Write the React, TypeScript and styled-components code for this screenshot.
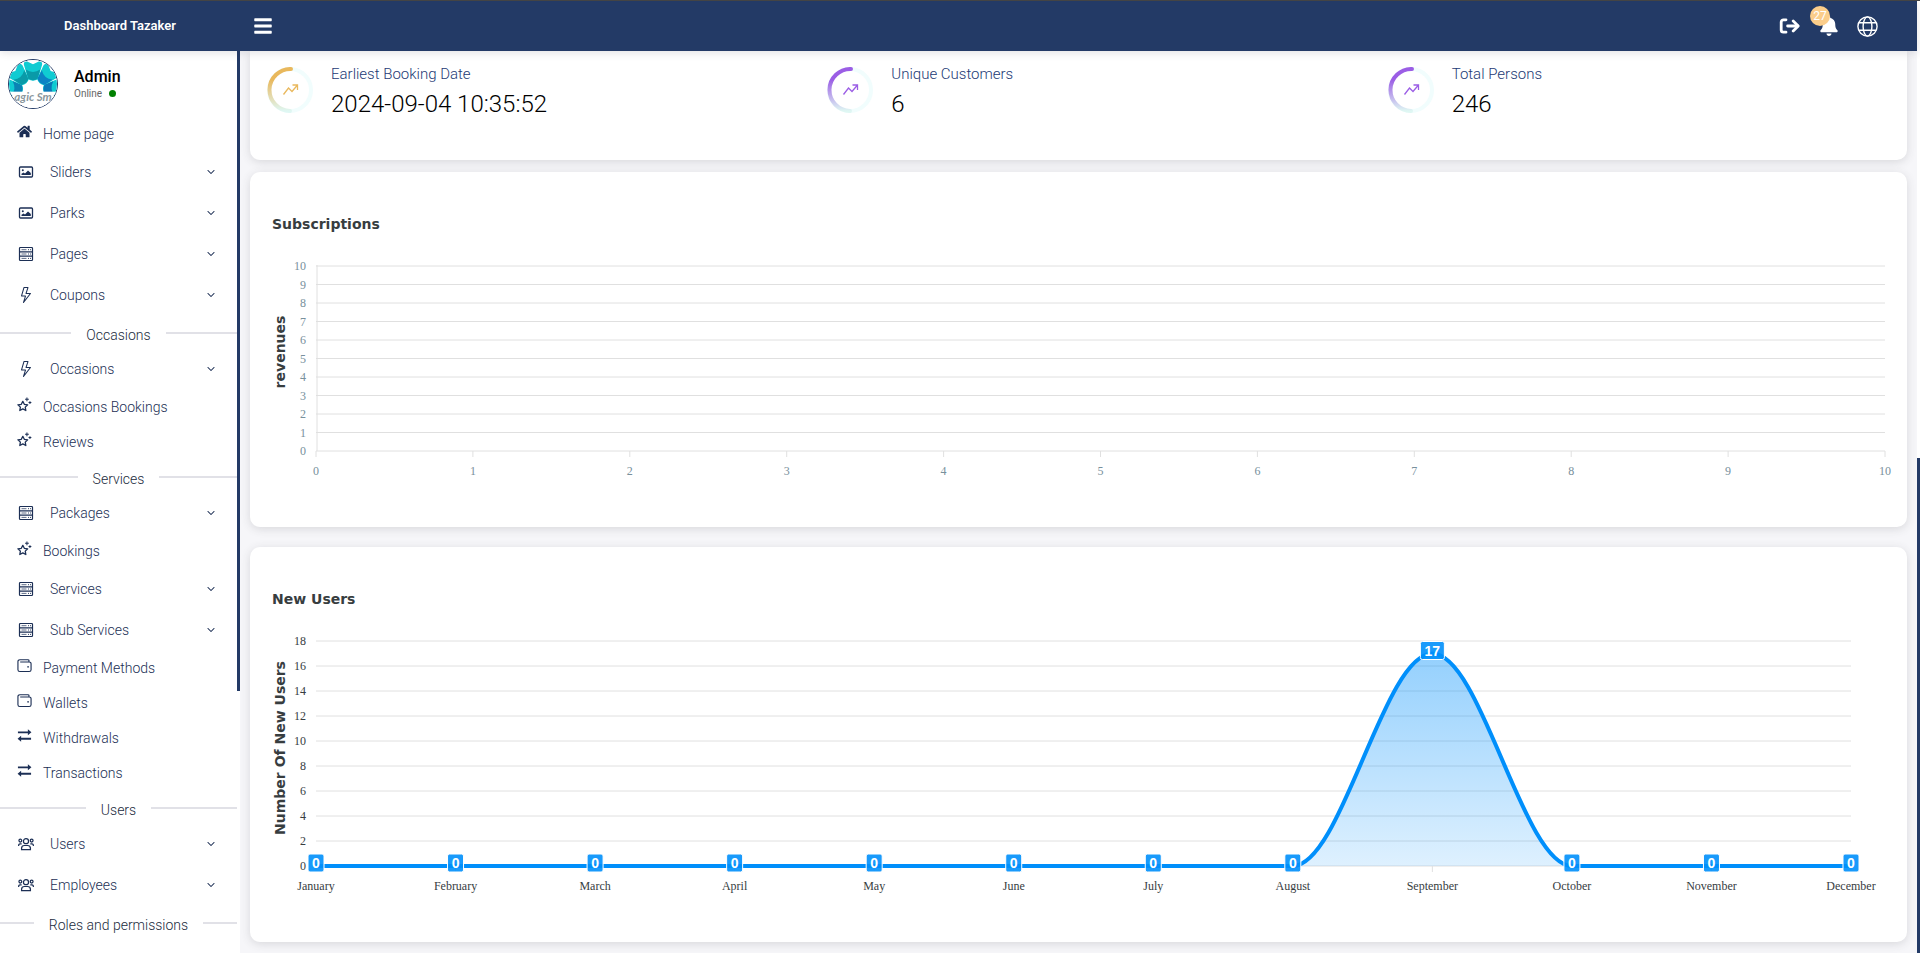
import React, { useEffect, useRef, useState } from "react";
import styled, { createGlobalStyle } from "styled-components";
import { FaHome, FaBars, FaBell } from "react-icons/fa";
import { BsChevronDown, BsLightning } from "react-icons/bs";

const NAVY = "#233a66";
const UI = `Roboto, "Noto Sans", "Liberation Sans", sans-serif`;
const AXIS = `"Liberation Serif", serif`;
const HEADING = `"DejaVu Sans", "Liberation Sans", sans-serif`;

const Global = createGlobalStyle`
  *, *::before, *::after { box-sizing: border-box; }
  body { margin: 0; font-family: ${UI}; background: #f6f6f9; }
  button { font: inherit; border: 0; background: none; padding: 0; cursor: pointer; }
  a { color: inherit; text-decoration: none; }
`;

const Shell = styled.div`
  display: flex;
  height: 100vh;
  overflow: hidden;
  border-top: 1px solid #444;
`;

const Page = styled.div`
  flex: 1;
  min-width: 0;
  display: flex;
  flex-direction: column;
`;

const ScrollTrack = styled.div<{ $before: number; $thumb: number }>`
  flex: none;
  width: 3px;
  display: grid;
  grid-template-rows: ${(p) => `${p.$before}fr ${p.$thumb}fr ${100 - p.$before - p.$thumb}fr`};
  background: #fff;
  &::before {
    content: "";
    grid-row: 2;
    background: ${NAVY};
  }
`;

const Header = styled.header`
  position: relative;
  z-index: 2;
  flex: none;
  display: flex;
  align-items: center;
  height: 50px;
  padding-right: 39px;
  background: ${NAVY};
  color: #fff;
  box-shadow: 0 2px 8px rgba(60, 60, 70, 0.14);
`;

const Brand = styled.div`
  width: 240px;
  padding-bottom: 2px;
  text-align: center;
  font-size: 13px;
  font-weight: 600;
`;

const MenuButton = styled.button`
  display: flex;
  margin-left: 13px;
  color: #fff;
  font-size: 20px;
`;

const HeaderActions = styled.div`
  display: flex;
  align-items: center;
  gap: 18px;
  margin-left: auto;
`;

const HeaderButton = styled.button`
  position: relative;
  display: flex;
  width: 21px;
  justify-content: center;
  color: #fff;
  font-size: 20px;
`;

const Badge = styled.span`
  position: absolute;
  top: -10px;
  left: -8px;
  width: 20px;
  height: 20px;
  border-radius: 50%;
  background: #fbcd8a;
  color: #fff;
  font-size: 12px;
  line-height: 20px;
  text-align: center;
`;

const Body = styled.div`
  flex: 1;
  min-height: 0;
  display: flex;
`;

const Sidebar = styled.aside`
  flex: none;
  display: flex;
  width: 240px;
  background: #fff;
`;

const SidebarContent = styled.div`
  flex: 1;
  min-width: 0;
  overflow: hidden;
`;

const Profile = styled.div`
  display: flex;
  align-items: center;
  gap: 16px;
  height: 65px;
  padding: 0 8px;
`;

const Avatar = styled.svg`
  width: 50px;
  height: 50px;
  border: 1px solid ${NAVY};
  border-radius: 50%;
`;

const ProfileName = styled.div`
  font-size: 16px;
  line-height: 20px;
  font-weight: 500;
  color: #000;
`;

const Status = styled.div`
  display: flex;
  align-items: center;
  gap: 7px;
  font-size: 10px;
  line-height: 14px;
  color: #666;
  &::after {
    content: "";
    width: 7px;
    height: 7px;
    border-radius: 50%;
    background: #008000;
  }
`;

const NavLink = styled.a`
  display: flex;
  align-items: center;
  gap: 11px;
  height: 35px;
  padding-left: 17px;
  color: #1c2f55;
  font-size: 14px;
  font-weight: 300;
  svg {
    width: 15px;
    height: 15px;
    margin-bottom: 4px;
  }
`;

const NavGroup = styled.button`
  display: flex;
  align-items: center;
  width: 100%;
  height: 41px;
  padding: 0 22px 0 17px;
  color: #1c2f55;
  font-size: 14px;
  font-weight: 300;
`;

const GroupIcon = styled.span`
  display: flex;
  justify-content: center;
  width: 18px;
  margin-right: 15px;
  svg {
    width: 16px;
    height: 16px;
  }
`;

const Chevron = styled(BsChevronDown)`
  width: 8px;
  height: 8px;
  margin-left: auto;
  stroke-width: 1;
`;

const Divider = styled.div`
  display: flex;
  align-items: center;
  gap: 15px;
  height: 33px;
  padding-top: 7px;
  color: #222b3d;
  font-size: 14px;
  font-weight: 300;
  &::before,
  &::after {
    content: "";
    flex: 1;
    height: 2px;
    margin-bottom: 4px;
    background: #e1e1e7;
  }
`;

const Main = styled.main`
  flex: 1;
  min-width: 0;
  padding: 0 10px;
  overflow: hidden;
`;

const Card = styled.section`
  padding: 33px 18px 0;
  border-radius: 10px;
  background: #fff;
  box-shadow: 0 2px 10px rgba(60, 60, 70, 0.16);
  & + & {
    margin-top: 20px;
  }
`;

const StatsCard = styled(Card)`
  display: grid;
  grid-template-columns: repeat(3, 1fr);
  column-gap: 58px;
  height: 109px;
  margin-bottom: -8px;
  padding: 11px 17px 0;
  border-radius: 0 0 10px 10px;
`;

const Stat = styled.div`
  display: flex;
  align-items: flex-start;
  gap: 18px;
`;

const StatRing = styled.svg`
  flex: none;
  width: 46px;
  height: 46px;
  margin-top: 5px;
`;

const StatLabel = styled.div`
  font-size: 15px;
  line-height: 24px;
  font-weight: 300;
  color: #233a75;
`;

const StatValue = styled.div`
  font-size: 24px;
  line-height: 36px;
  font-weight: 300;
  color: #000;
`;

const ChartTitle = styled.h2`
  margin: 0;
  padding-left: 4px;
  font-family: ${HEADING};
  font-size: 14px;
  line-height: 38px;
  font-weight: 700;
  color: #373d3f;
`;

const ChartSvg = styled.svg`
  display: block;
  width: 100%;
  overflow: visible;
`;

const TickText = styled.text<{ $color: string }>`
  font-family: ${AXIS};
  font-size: 12px;
  fill: ${(p) => p.$color};
`;

const AxisTitle = styled.text`
  font-family: ${HEADING};
  font-size: 14px;
  font-weight: 700;
  fill: #373d3f;
`;

const PointText = styled.text`
  font-family: "Liberation Sans", sans-serif;
  font-size: 14px;
  font-weight: 700;
  fill: #fff;
`;

const ImageIcon = () => (
  <svg viewBox="0 0 16 16" fill="none" stroke="currentColor">
    <rect x="1.5" y="3" width="13" height="10" rx="1" strokeWidth="1.3" />
    <circle cx="4.8" cy="6.2" r="1" fill="currentColor" stroke="none" />
    <path d="M3.5 11V9.8L5.5 8.6l1.5.8L10 6.6l2.8 2.4V11Z" fill="currentColor" stroke="none" />
  </svg>
);

const ServerIcon = () => (
  <svg viewBox="0 0 16 16" fill="none" stroke="currentColor" strokeWidth="1.2">
    <rect x="1.5" y="1.5" width="13" height="13" rx="0.8" />
    <path d="M1.5 5.8h13M1.5 10.2h13" />
    <path d="M3.5 3.7h5M3.5 8h5M3.5 12.4h5" strokeWidth="0.7" />
    <path d="M10 3.7h1M12 3.7h1M10 8h1M12 8h1M10 12.4h1M12 12.4h1" strokeWidth="0.9" />
  </svg>
);

const StarIcon = () => (
  <svg viewBox="0 0 16 16" fill="none" stroke="currentColor" strokeWidth="1.4" strokeLinejoin="round">
    <path d="M6.2 4.6l1.6 3.2 3.6.5-2.6 2.5.6 3.6-3.2-1.7L3 14.4l.6-3.6L1 8.3l3.6-.5Z" />
    <path d="M10.6 0.4v4M8.6 2.4h4M13.8 4.4v3M12.3 5.9h3" strokeWidth="1.1" />
  </svg>
);

const WalletIcon = () => (
  <svg viewBox="0 0 16 16" fill="none" stroke="currentColor" strokeWidth="1.2">
    <path d="M12.8 4.2V3a1.2 1.2 0 0 0-1.2-1.2H3A2 2 0 0 0 1 3.8v8.6a2 2 0 0 0 2 2h10a2 2 0 0 0 2-2V6.2a2 2 0 0 0-2-2H3.4" />
    <circle cx="11.8" cy="9.4" r="0.9" fill="currentColor" stroke="none" />
  </svg>
);

const ExchangeIcon = () => (
  <svg viewBox="0 0 16 16" fill="currentColor">
    <path d="M1 3.6h10.6V1.4L15.4 4.6 11.6 7.8V5.6H1zM15 10.4H4.4V8.2L.6 11.4l3.8 3.2v-2.2H15z" />
  </svg>
);

const UsersIcon = () => (
  <svg viewBox="0.5 0 17 14" fill="none" stroke="currentColor" strokeWidth="1.3">
    <circle cx="9" cy="4" r="2.7" />
    <circle cx="3" cy="3.4" r="1.5" />
    <circle cx="15" cy="3.4" r="1.5" />
    <path d="M4.3 13v-1.6A3 3 0 0 1 7.3 8.6h3.4a3 3 0 0 1 3 2.8V13zM1.2 9V8A1.5 1.5 0 0 1 2.6 6.8h1.8M16.8 9V8a1.5 1.5 0 0 0-1.4-1.2h-1.8" />
  </svg>
);

const LogoutIcon = () => (
  <svg width="21" height="16" viewBox="0 0 21 16" fill="none" stroke="currentColor" strokeWidth="2.8" strokeLinecap="round">
    <path d="M7 1.8H4.4A2.2 2.2 0 0 0 2.2 4v8a2.2 2.2 0 0 0 2.2 2.2H7" />
    <path d="M8.6 8h10" strokeWidth="2.8" />
    <path d="M14.2 3L19.2 8l-5 5" strokeLinejoin="round" />
  </svg>
);

const GlobeIcon = () => (
  <svg width="21" height="21" viewBox="0 0 21 21" fill="none" stroke="currentColor" strokeWidth="1.4">
    <circle cx="10.5" cy="10.5" r="9.6" />
    <ellipse cx="10.5" cy="10.5" rx="4.4" ry="9.6" />
    <path d="M1.8 6.8h17.4M1.8 14.2h17.4" />
  </svg>
);

type NavItem = { kind: "link" | "group" | "divider"; label: string; icon?: React.ReactNode };

const NAV: NavItem[] = [
  { kind: "link", label: "Home page", icon: <FaHome /> },
  { kind: "group", label: "Sliders", icon: <ImageIcon /> },
  { kind: "group", label: "Parks", icon: <ImageIcon /> },
  { kind: "group", label: "Pages", icon: <ServerIcon /> },
  { kind: "group", label: "Coupons", icon: <BsLightning /> },
  { kind: "divider", label: "Occasions" },
  { kind: "group", label: "Occasions", icon: <BsLightning /> },
  { kind: "link", label: "Occasions Bookings", icon: <StarIcon /> },
  { kind: "link", label: "Reviews", icon: <StarIcon /> },
  { kind: "divider", label: "Services" },
  { kind: "group", label: "Packages", icon: <ServerIcon /> },
  { kind: "link", label: "Bookings", icon: <StarIcon /> },
  { kind: "group", label: "Services", icon: <ServerIcon /> },
  { kind: "group", label: "Sub Services", icon: <ServerIcon /> },
  { kind: "link", label: "Payment Methods", icon: <WalletIcon /> },
  { kind: "link", label: "Wallets", icon: <WalletIcon /> },
  { kind: "link", label: "Withdrawals", icon: <ExchangeIcon /> },
  { kind: "link", label: "Transactions", icon: <ExchangeIcon /> },
  { kind: "divider", label: "Users" },
  { kind: "group", label: "Users", icon: <UsersIcon /> },
  { kind: "group", label: "Employees", icon: <UsersIcon /> },
  { kind: "divider", label: "Roles and permissions" },
];

const STATS = [
  { label: "Earliest Booking Date", value: "2024-09-04 10:35:52", color: "#e9b85c" },
  { label: "Unique Customers", value: "6", color: "#9b5de5" },
  { label: "Total Persons", value: "246", color: "#9b5de5" },
];

const MONTHS = [
  "January", "February", "March", "April", "May", "June",
  "July", "August", "September", "October", "November", "December",
];
const NEW_USERS = [0, 0, 0, 0, 0, 0, 0, 0, 17, 0, 0, 0];

function useWidth() {
  const ref = useRef<SVGSVGElement>(null);
  const [width, setWidth] = useState(1621);
  useEffect(() => {
    if (!ref.current) return;
    const observer = new ResizeObserver(([entry]) => setWidth(entry.contentRect.width));
    observer.observe(ref.current);
    return () => observer.disconnect();
  }, []);
  return [ref, width] as const;
}

const Ring = ({ color, id }: { color: string; id: string }) => (
  <StatRing viewBox="0 0 46 46" fill="none" aria-hidden="true">
    <defs>
      <linearGradient id={id} x1="0" y1="0" x2="0" y2="1">
        <stop offset="0.25" stopColor={color} />
        <stop offset="1" stopColor="#dff7f3" />
      </linearGradient>
    </defs>
    <circle cx="23" cy="23" r="21" stroke="#f1fdfd" strokeWidth="4" />
    <path d="M24 2A21 21 0 0 0 23 44" stroke={`url(#${id})`} strokeWidth="4" strokeLinecap="round" />
    <path d="M16.5 27.5l5-6.5 3.5 3.5 5.5-6.5M25.5 18h5v5" stroke={color} strokeWidth="1.3" />
  </StatRing>
);

function SubscriptionsChart() {
  const [ref, width] = useWidth();
  const left = 48;
  const right = width - 4;
  const top = 23;
  const ticks = Array.from({ length: 11 }, (_, i) => i);
  const x = (v: number) => left + ((right - left) * v) / 10;
  const y = (v: number) => top + 185 - v * 18.5;
  return (
    <ChartSvg ref={ref} height="284" role="img" aria-label="Subscriptions revenues">
      {ticks.map((v) => (
        <g key={v}>
          <line x1={left} x2={right} y1={y(v)} y2={y(v)} stroke="#e0e0e0" />
          <line x1={x(v)} x2={x(v)} y1={y(0)} y2={y(0) + 6} stroke="#e0e0e0" />
          <TickText $color="#78909c" x={left - 10} y={y(v) + 4} textAnchor="end">{v}</TickText>
          <TickText $color="#78909c" x={x(v)} y={y(0) + 24} textAnchor="middle">{v}</TickText>
        </g>
      ))}
      <line x1={left + 1} x2={left + 1} y1={top - 1} y2={y(0)} stroke="#e0e0e0" />
      <AxisTitle transform="translate(17 109) rotate(-90)" textAnchor="middle">revenues</AxisTitle>
    </ChartSvg>
  );
}

function NewUsersChart() {
  const [ref, width] = useWidth();
  const left = 48;
  const right = width - 38;
  const top = 23;
  const base = top + 225;
  const x = (i: number) => left + ((right - left) * i) / (MONTHS.length - 1);
  const y = (v: number) => base - v * 12.5;
  const bend = (x(1) - x(0)) * 0.35;
  const line = NEW_USERS.map((v, i) =>
    i === 0
      ? `M${x(0)} ${y(v)}`
      : `C${x(i - 1) + bend} ${y(NEW_USERS[i - 1])} ${x(i) - bend} ${y(v)} ${x(i)} ${y(v)}`
  ).join(" ");
  return (
    <ChartSvg ref={ref} height="324" role="img" aria-label="Number of new users by month">
      <defs>
        <linearGradient id="users-area" x1="0" y1="0" x2="0" y2="1">
          <stop offset="0" stopColor="#008ffb" stopOpacity="0.42" />
          <stop offset="1" stopColor="#008ffb" stopOpacity="0.13" />
        </linearGradient>
      </defs>
      {Array.from({ length: 10 }, (_, i) => i * 2).map((v) => (
        <g key={v}>
          <line x1={left} x2={right} y1={y(v)} y2={y(v)} stroke="#e0e0e0" />
          <TickText $color="#373d3f" x={left - 10} y={y(v) + 4} textAnchor="end">{v}</TickText>
        </g>
      ))}
      <path d={`${line} L${right} ${base} L${left} ${base}Z`} fill="url(#users-area)" />
      {MONTHS.map((m, i) => (
        <line key={m} x1={x(i)} x2={x(i)} y1={base} y2={base + 6} stroke="#e0e0e0" />
      ))}
      <path d={line} fill="none" stroke="#008ffb" strokeWidth="4" />
      {MONTHS.map((m, i) => {
        const w = NEW_USERS[i] > 9 ? 24 : 16;
        return (
          <g key={m}>
            <rect
              x={x(i) - w / 2}
              y={y(NEW_USERS[i]) - 12}
              width={w}
              height={18}
              rx="2"
              fill="#008ffb"
              fillOpacity="0.9"
              stroke="#fff"
            />
            <PointText x={x(i)} y={y(NEW_USERS[i]) + 2} textAnchor="middle">{NEW_USERS[i]}</PointText>
            <TickText $color="#373d3f" x={x(i)} y={base + 24} textAnchor="middle">{m}</TickText>
          </g>
        );
      })}
      <AxisTitle transform="translate(17 130) rotate(-90)" textAnchor="middle">Number Of New Users</AxisTitle>
    </ChartSvg>
  );
}

const PETALS = [
  { angle: -84, tone: "#0b83b4" },
  { angle: -42, tone: "#0a9aa8" },
  { angle: 0, tone: "#0a9aa8" },
  { angle: 42, tone: "#0b83c4" },
  { angle: 84, tone: "#0b78b8" },
];

const AvatarPicture = () => (
  <Avatar viewBox="0 0 50 50" role="img" aria-label="Admin avatar">
    <rect width="50" height="50" fill="#fff" />
    {PETALS.map(({ angle, tone }) => (
      <g key={angle} transform={`rotate(${angle} 25 32)`}>
        <path d="M20 20L15.5 5Q15 1 19 1.5L25 4.5L31 1.5Q35 1 34.5 5L30 20Q25 23 20 20Z" fill="#10cbd2" />
        <path d="M17.5 10Q25 15 32.5 10L30 19.5Q25 22.5 20 19.5Z" fill={tone} />
      </g>
    ))}
    <rect y="33" width="50" height="17" fill="#fff" />
    <text x="25" y="43" textAnchor="middle" fontFamily="Lato, sans-serif" fontSize="12" fontStyle="italic" fontWeight="700" fill="#8b979d">
      agic Sm
    </text>
  </Avatar>
);

export default function App() {
  return (
    <>
      <Global />
      <Shell>
        <Page>
          <Header>
            <Brand>Dashboard Tazaker</Brand>
            <MenuButton aria-label="Toggle menu"><FaBars /></MenuButton>
            <HeaderActions>
              <HeaderButton aria-label="Log out"><LogoutIcon /></HeaderButton>
              <HeaderButton aria-label="Notifications">
                <FaBell />
                <Badge>27</Badge>
              </HeaderButton>
              <HeaderButton aria-label="Language"><GlobeIcon /></HeaderButton>
            </HeaderActions>
          </Header>
          <Body>
            <Sidebar>
              <SidebarContent>
                <Profile>
                  <AvatarPicture />
                  <div>
                    <ProfileName>Admin</ProfileName>
                    <Status>Online</Status>
                  </div>
                </Profile>
                <nav>
                  {NAV.map((item) => {
                    const key = item.kind + item.label;
                    if (item.kind === "divider") return <Divider key={key}>{item.label}</Divider>;
                    if (item.kind === "link")
                      return <NavLink key={key} href="#">{item.icon}{item.label}</NavLink>;
                    return (
                      <NavGroup key={key} aria-expanded="false">
                        <GroupIcon>{item.icon}</GroupIcon>
                        {item.label}
                        <Chevron />
                      </NavGroup>
                    );
                  })}
                </nav>
              </SidebarContent>
              <ScrollTrack $before={0} $thumb={71} />
            </Sidebar>
            <Main>
              <StatsCard>
                {STATS.map((s, i) => (
                  <Stat key={s.label}>
                    <Ring color={s.color} id={`ring-${i}`} />
                    <div>
                      <StatLabel>{s.label}</StatLabel>
                      <StatValue>{s.value}</StatValue>
                    </div>
                  </Stat>
                ))}
              </StatsCard>
              <Card>
                <ChartTitle>Subscriptions</ChartTitle>
                <SubscriptionsChart />
              </Card>
              <Card>
                <ChartTitle>New Users</ChartTitle>
                <NewUsersChart />
              </Card>
            </Main>
          </Body>
        </Page>
        <ScrollTrack $before={48} $thumb={52} />
      </Shell>
    </>
  );
}
